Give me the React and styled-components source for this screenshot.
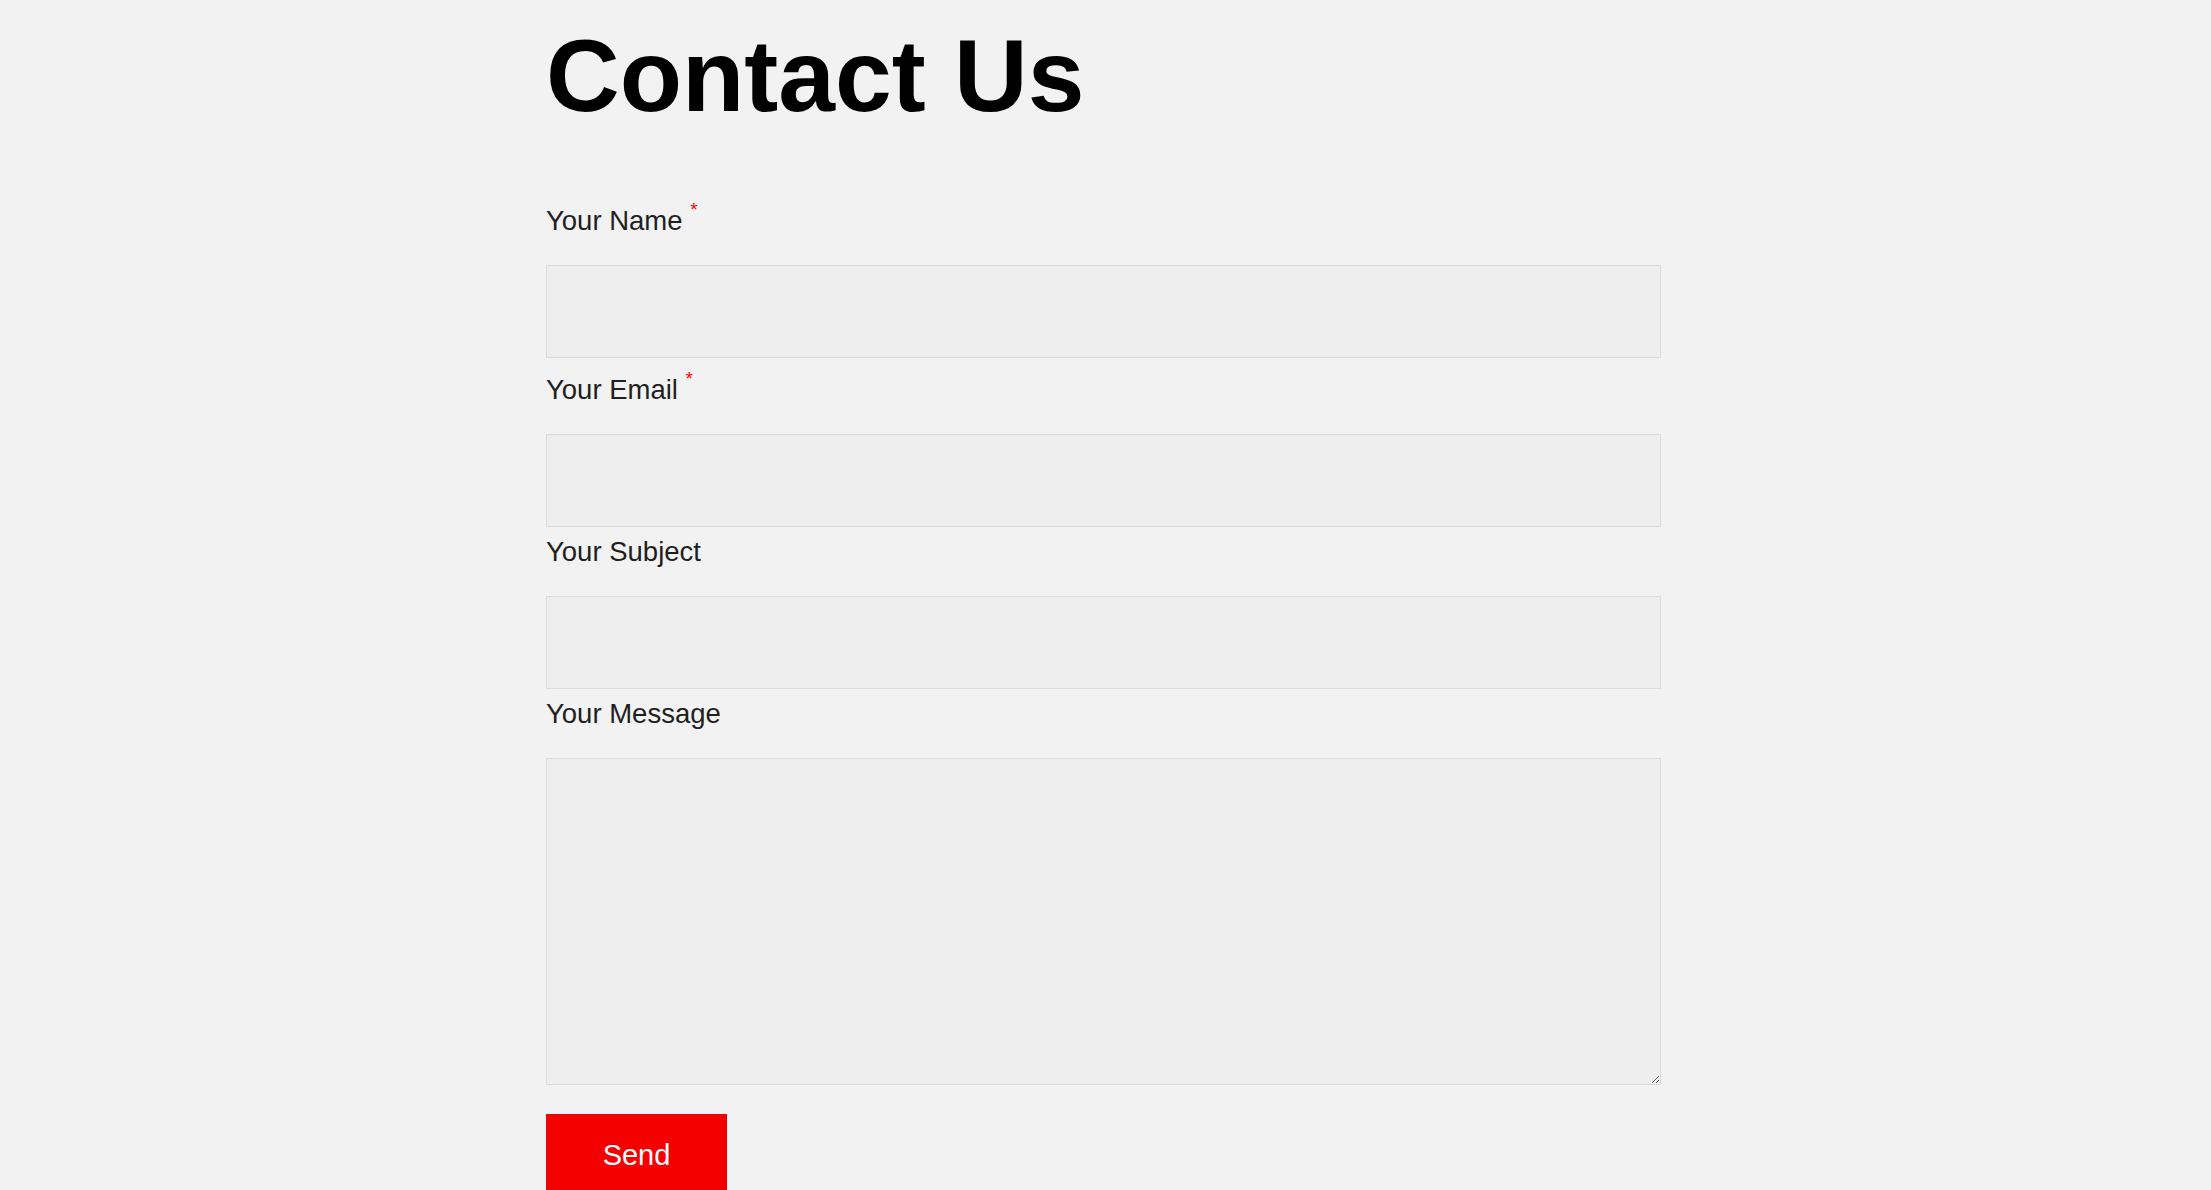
import React from "react";
import styled, { createGlobalStyle } from "styled-components";

const GlobalStyle = createGlobalStyle`
  html, body {
    margin: 0;
    padding: 0;
    background: #f2f2f2;
    font-family: "Liberation Sans", Arial, sans-serif;
  }
`;

const fields = [
  { id: "name", label: "Your Name", required: true },
  { id: "email", label: "Your Email", required: true, type: "email" },
  { id: "subject", label: "Your Subject" },
  { id: "message", label: "Your Message", multiline: true },
];

export default function App() {
  return (
    <>
      <GlobalStyle />
      <Page>
        <Title>Contact Us</Title>
        <Form onSubmit={(e) => e.preventDefault()}>
          {fields.map((f) => (
            <Field key={f.id}>
              <Label htmlFor={f.id}>
                {f.label}
                {f.required && (
                  <>
                    {" "}
                    <Star>*</Star>
                  </>
                )}
              </Label>
              {f.multiline ? (
                <TextArea id={f.id} />
              ) : (
                <Input id={f.id} type={f.type || "text"} />
              )}
            </Field>
          ))}
          <SendButton type="submit">Send</SendButton>
        </Form>
      </Page>
    </>
  );
}

const Page = styled.div`
  width: 1115px;
  margin-left: 546px;
`;

const Title = styled.h1`
  margin: 16px 0 62px;
  font-size: 102px;
  line-height: 120px;
  font-weight: 700;
  color: #000;
`;

const Form = styled.form`
  display: flex;
  flex-direction: column;
`;

const Field = styled.div`
  display: flex;
  flex-direction: column;
  margin-bottom: 9px;
`;

const Label = styled.label`
  display: block;
  font-size: 27.5px;
  line-height: 32px;
  color: #1f1f1f;
  margin-bottom: 28px;
`;

const Star = styled.sup`
  position: relative;
  top: -4px;
  font-size: 19px;
  color: #f00;
`;

const Input = styled.input`
  box-sizing: border-box;
  width: 100%;
  height: 93px;
  margin: 0;
  padding: 0 16px;
  background: #eeeeee;
  border: 1px solid #dcdcdc;
  border-radius: 0;
  font-family: inherit;
  font-size: 20px;
  outline: none;
`;

const TextArea = styled.textarea`
  box-sizing: border-box;
  display: block;
  width: 100%;
  height: 327px;
  margin: 0;
  padding: 16px;
  background: #eeeeee;
  border: 1px solid #dcdcdc;
  border-radius: 0;
  font-family: inherit;
  font-size: 20px;
  resize: vertical;
  outline: none;
`;

const SendButton = styled.button`
  align-self: flex-start;
  width: 181px;
  margin-top: 20px;
  padding: 25px 0 21px;
  background: #f50000;
  color: #fff;
  border: none;
  border-radius: 0;
  font-family: inherit;
  font-size: 29px;
  line-height: normal;
  text-align: center;
  cursor: pointer;
`;
